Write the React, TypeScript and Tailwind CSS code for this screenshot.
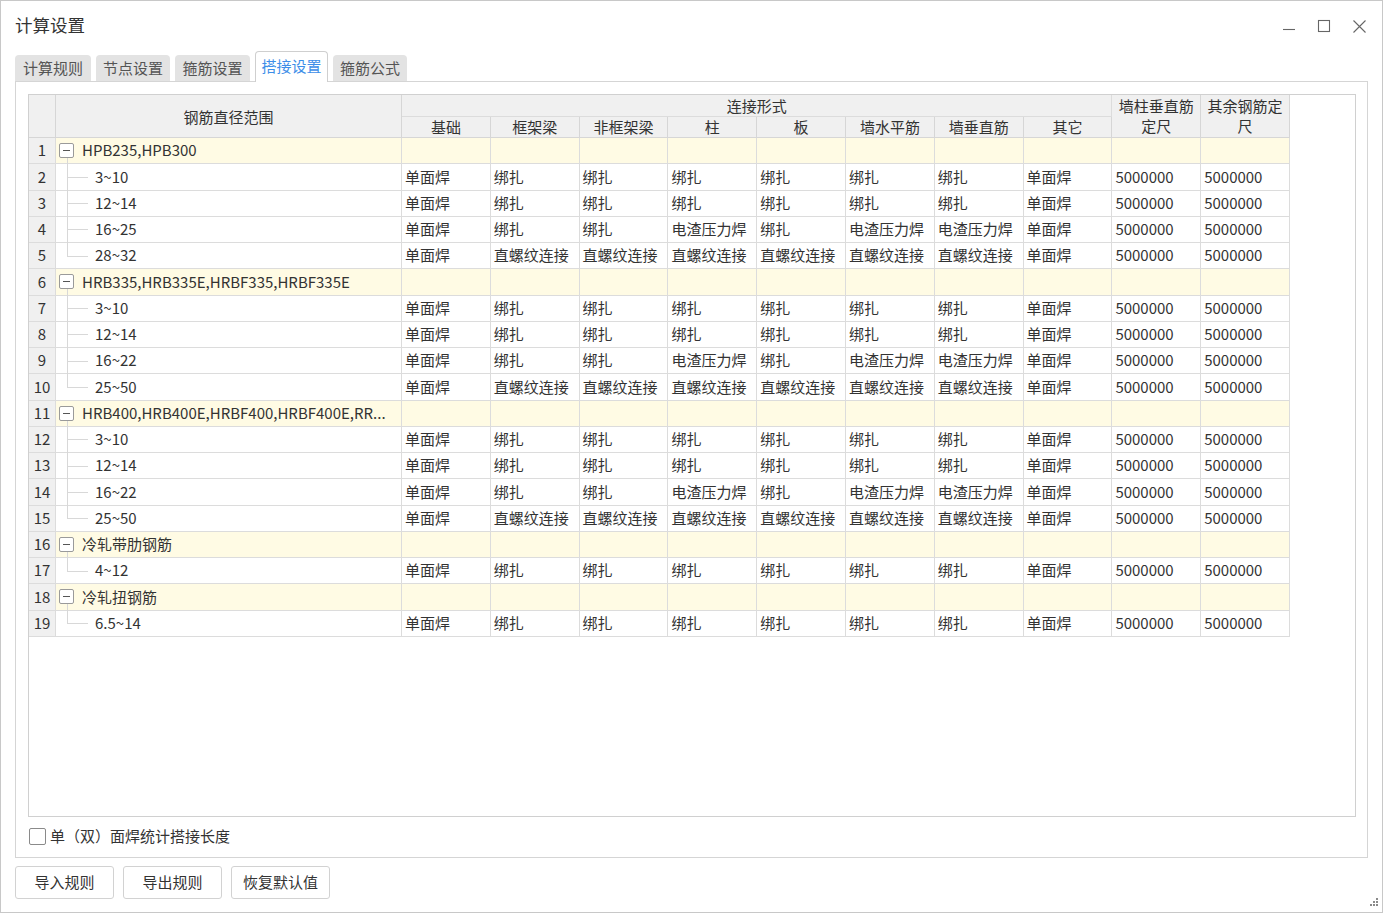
import React from "react";

// 搭接设置 dialog — grid of lap-joint rules per rebar group
const FONT = { fontFamily: '"Noto Sans CJK SC", "Noto Sans", sans-serif' };

const A = ["单面焊", "绑扎", "绑扎", "绑扎", "绑扎", "绑扎", "绑扎", "单面焊", "5000000", "5000000"];
const B = ["单面焊", "绑扎", "绑扎", "电渣压力焊", "绑扎", "电渣压力焊", "电渣压力焊", "单面焊", "5000000", "5000000"];
const C = ["单面焊", "直螺纹连接", "直螺纹连接", "直螺纹连接", "直螺纹连接", "直螺纹连接", "直螺纹连接", "单面焊", "5000000", "5000000"];

interface Group {
  name: string;
  kids: { range: string; vals: string[] }[];
}

const GROUPS: Group[] = [
  { name: "HPB235,HPB300", kids: [{ range: "3~10", vals: A }, { range: "12~14", vals: A }, { range: "16~25", vals: B }, { range: "28~32", vals: C }] },
  { name: "HRB335,HRB335E,HRBF335,HRBF335E", kids: [{ range: "3~10", vals: A }, { range: "12~14", vals: A }, { range: "16~22", vals: B }, { range: "25~50", vals: C }] },
  { name: "HRB400,HRB400E,HRBF400,HRBF400E,RR...", kids: [{ range: "3~10", vals: A }, { range: "12~14", vals: A }, { range: "16~22", vals: B }, { range: "25~50", vals: C }] },
  { name: "冷轧带肋钢筋", kids: [{ range: "4~12", vals: A }] },
  { name: "冷轧扭钢筋", kids: [{ range: "6.5~14", vals: A }] },
];

const SUB = ["基础", "框架梁", "非框架梁", "柱", "板", "墙水平筋", "墙垂直筋", "其它"];
const TABS = [
  { t: "计算规则", w: 76 },
  { t: "节点设置", w: 74 },
  { t: "箍筋设置", w: 75 },
  { t: "搭接设置", w: 73, active: true },
  { t: "箍筋公式", w: 74 },
];

const cell = "border-r border-b border-[#dcdcdc] flex items-center";
const hdr = "border-r border-b border-[#d6d6d6] bg-[#f0f0f0] flex items-center justify-center text-center leading-[20px]";

function TreeBox() {
  return (
    <span className="relative z-10 w-[15px] h-[15px] border border-[#9a9a9a] rounded-[2px] bg-white flex items-center justify-center shrink-0">
      <span className="w-[7px] h-px bg-[#555]" />
    </span>
  );
}

export default function App() {
  let n = 0;
  const rows: React.ReactNode[] = [];
  GROUPS.forEach((g) => {
    n += 1;
    rows.push(
      <React.Fragment key={`g${n}`}>
        <div className={`${cell} justify-center bg-[#f0f0f0]`}>{n}</div>
        <div className={`${cell} bg-[#fffbe4] pl-[3px] relative`}>
          <TreeBox />
          <span className="absolute left-[11px] top-[18px] bottom-[-1px] w-px bg-[#d8d8d8]" />
          <span className="ml-[8px] whitespace-nowrap">{g.name}</span>
        </div>
        {Array.from({ length: 10 }).map((_, i) => (
          <div key={i} className={`${cell} bg-[#fffbe4]`} />
        ))}
      </React.Fragment>
    );
    g.kids.forEach((k, ki) => {
      n += 1;
      const last = ki === g.kids.length - 1;
      rows.push(
        <React.Fragment key={`r${n}`}>
          <div className={`${cell} justify-center bg-[#f0f0f0]`}>{n}</div>
          <div className={`${cell} relative`}>
            <span className={`absolute left-[11px] top-0 w-px bg-[#d8d8d8] ${last ? "h-1/2" : "bottom-[-1px]"}`} />
            <span className="absolute left-[11px] top-1/2 w-[21px] h-px bg-[#d8d8d8]" />
            <span className="ml-[39px]">{k.range}</span>
          </div>
          {k.vals.map((v, i) => (
            <div key={i} className={`${cell} pl-[3px] whitespace-nowrap`}>{v}</div>
          ))}
        </React.Fragment>
      );
    });
  });

  return (
    <div style={FONT} className="relative w-[1383px] h-[913px] bg-white border border-[#c8c8c8] text-[#333] flex flex-col overflow-hidden">
      {/* title bar */}
      <div className="h-[50px] flex items-center justify-between pl-[14px] pr-[15px] pb-[2px] shrink-0">
        <span className="text-[17.5px]">计算设置</span>
        <div className="flex items-center gap-[21px] text-[#666] pt-[2px]">
          <svg width="14" height="14" viewBox="0 0 14 14"><path d="M1 10.5h12" stroke="currentColor" strokeWidth="1.1" /></svg>
          <svg width="14" height="14" viewBox="0 0 14 14"><rect x="1.5" y="1.5" width="11" height="11" fill="none" stroke="currentColor" strokeWidth="1.1" /></svg>
          <svg width="15" height="15" viewBox="0 0 15 15"><path d="M1.5 1.5l12 12M13.5 1.5l-12 12" stroke="currentColor" strokeWidth="1.1" /></svg>
        </div>
      </div>

      {/* tabs */}
      <div className="relative z-10 h-[31px] flex items-end pl-[14px] gap-[5px] shrink-0 text-[15px]">
        {TABS.map((t) =>
          t.active ? (
            <div key={t.t} style={{ width: t.w }} className="h-[31px] bg-white border border-b-0 border-[#cfcfcf] rounded-t-[4px] flex items-center justify-center text-[#3d8ee8] pb-[2px]">
              {t.t}
            </div>
          ) : (
            <div key={t.t} style={{ width: t.w }} className="h-[26px] mb-px bg-[#e3e3e3] rounded-t-[4px] flex items-center justify-center text-[#555]">
              {t.t}
            </div>
          )
        )}
      </div>

      {/* panel */}
      <div className="-mt-px ml-[14px] w-[1353px] h-[777px] border border-[#d5d5d5] flex flex-col shrink-0">
        <div className="ml-[12px] mt-[12px] w-[1328px] h-[723px] border border-[#d0d0d0] bg-white text-[15px]">
          <div className="grid grid-cols-[27px_346px_repeat(10,88.8px)] grid-rows-[22px_21px_repeat(19,26.25px)] w-max">
            <div className={`${hdr} row-span-2`} />
            <div className={`${hdr} row-span-2 pt-[1px]`}>钢筋直径范围</div>
            <div className={`${hdr} col-span-8 border-[#dcdcdc]`}>连接形式</div>
            <div className={`${hdr} row-span-2 flex-col`}>
              <span>墙柱垂直筋</span>
              <span>定尺</span>
            </div>
            <div className={`${hdr} row-span-2 flex-col`}>
              <span>其余钢筋定</span>
              <span>尺</span>
            </div>
            {SUB.map((s) => (
              <div key={s} className={hdr}>{s}</div>
            ))}
            {rows}
          </div>
        </div>

        <label className="flex items-center mt-[8px] ml-[13px] text-[15px]">
          <span className="w-[17px] h-[17px] border border-[#8a8a8a] rounded-[2px] bg-white" />
          <span className="ml-[4px]">单（双）面焊统计搭接长度</span>
        </label>
      </div>

      {/* buttons */}
      <div className="flex gap-[9px] ml-[14px] mt-[8px] text-[15px]">
        {["导入规则", "导出规则", "恢复默认值"].map((b) => (
          <button key={b} className="w-[99px] h-[33px] border border-[#d2d2d2] rounded-[3px] bg-white flex items-center justify-center">
            {b}
          </button>
        ))}
      </div>

      {/* resize grip */}
      <svg className="absolute right-[3px] bottom-[5px]" width="9" height="9" viewBox="0 0 9 9" fill="#8a8a8a">
        <rect x="6" y="0" width="2" height="2" />
        <rect x="3" y="3" width="2" height="2" />
        <rect x="6" y="3" width="2" height="2" />
        <rect x="0" y="6" width="2" height="2" />
        <rect x="3" y="6" width="2" height="2" />
        <rect x="6" y="6" width="2" height="2" />
      </svg>
    </div>
  );
}
